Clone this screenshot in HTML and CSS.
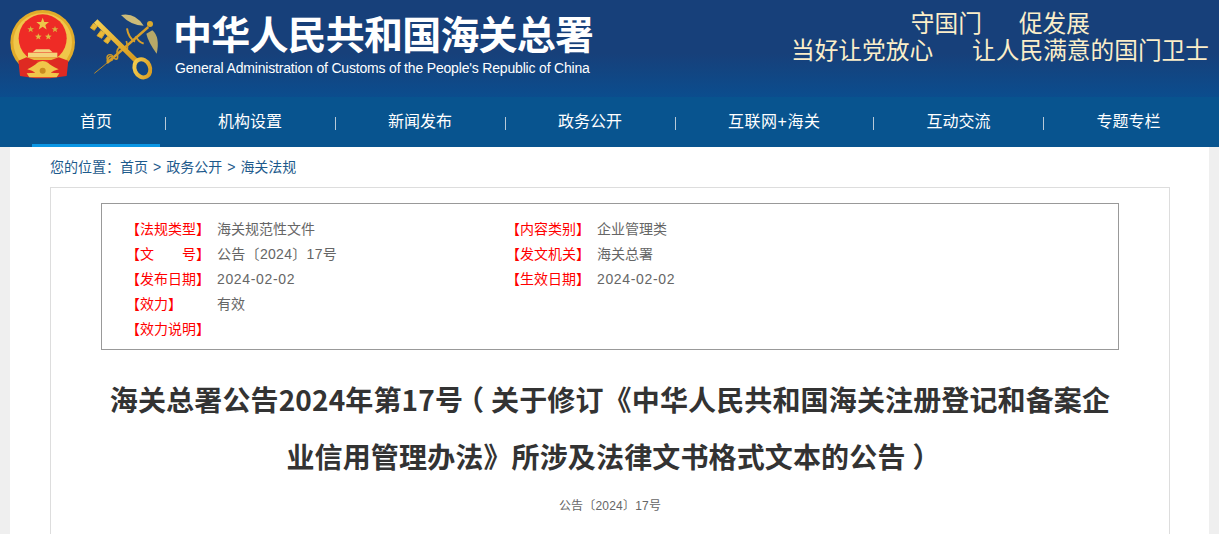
FILE: index.html
```html
<!DOCTYPE HTML>
<html>
<head>
<meta charset="UTF-8">
<title>海关总署公告2024年第17号</title>
<link rel="stylesheet" href="styles.css">
</head>
<body>
<div class="header">
	<div class="header-logos">
		<svg class="emblem" width="80" height="90" viewBox="0 0 240 270">
			<defs>
				<polygon id="star" points="0,-10 2.6,-3.2 10,-3.1 4.2,1.4 6.2,8.5 0,4.4 -6.2,8.5 -4.2,1.4 -10,-3.1 -2.6,-3.2"/>
			</defs>
			<circle cx="128" cy="127" r="97" fill="#e2ac2a"/>
			<circle cx="128" cy="127" r="88" fill="#f0c64a"/>
			<circle cx="128" cy="115" r="72" fill="#ee2b26"/>
			<use href="#star" transform="translate(128 72) scale(1.9)" fill="#ecc64a"/>
			<use href="#star" transform="translate(92 88)" fill="#d9b23e"/>
			<use href="#star" transform="translate(115 110)" fill="#e2bb42"/>
			<use href="#star" transform="translate(145 110)" fill="#e2bb42"/>
			<use href="#star" transform="translate(165 88)" fill="#d9b23e"/>
			<path d="M108 148 L148 148 L158 157 L98 157 Z" fill="#f3d680"/>
			<path d="M84 158 L172 158 L172 172 L84 172 Z" fill="#f4d37a"/>
			<path d="M75 172 L181 172 L181 180 L75 180 Z" fill="#e8b940"/>
			<path d="M55 182 L80 172 L128 190 L176 172 L205 182 L200 228 L150 235 L106 235 L60 228 Z" fill="#de2a22"/>
			<path d="M82 208 Q104 196 112 188 Q128 178 144 188 Q152 196 176 208 Q160 212 152 218 L178 220 L170 232 L88 232 L80 220 L106 218 Q98 212 82 208 Z" fill="#f0c64a"/>
			<circle cx="128" cy="212" r="9" fill="#c98c20"/>
		</svg>
		<svg class="key" width="80" height="80" viewBox="0 0 240 240">
			<defs>
				<linearGradient id="gold" x1="0" y1="0" x2="1" y2="1">
					<stop offset="0" stop-color="#f6d052"/>
					<stop offset="1" stop-color="#d6991e"/>
				</linearGradient>
			</defs>
			<path d="M108 30 Q150 22 176 62 Q138 62 108 30 Z" fill="#cdbb78"/>
			<path d="M202 76 Q226 96 215 146 Q190 112 184 86 Z" fill="#b8a868"/>
			<path d="M28 205 L66 174" stroke="#b98a2c" stroke-width="3" fill="none"/>
			<path d="M66 174 L190 66" stroke="#d9a02a" stroke-width="7" fill="none"/>
			<circle cx="195" cy="57" r="9" fill="#dba92c"/>
			<path d="M126 70 Q130 98 150 110 M176 116 Q160 110 152 94" stroke="#d9a02a" stroke-width="6" fill="none"/>
			<path d="M66 170 Q72 145 88 160 Q102 170 96 140 Q100 118 122 132 Q132 136 124 108" stroke="#cf9a28" stroke-width="5" fill="none"/>
			<circle cx="75" cy="158" r="9" stroke="#cf9a28" stroke-width="4" fill="none"/>
			<path d="M32 48 L152 166" stroke="url(#gold)" stroke-width="15" fill="none"/>
			<path d="M26 54 L16 68 L28 76 L38 62 M48 76 L36 92 L50 100 L60 84 M68 94 L56 108 L68 116 L78 102" fill="#e8b93a" stroke="#d8a62c" stroke-width="3"/>
			<ellipse cx="172" cy="190" rx="23" ry="28" transform="rotate(-25 172 190)" stroke="url(#gold)" stroke-width="12" fill="none"/>
		</svg>
	</div>
	<div class="header-name">
		<div class="name-cn">中华人民共和国海关总署</div>
		<div class="name-en">General Administration of Customs of the People's Republic of China</div>
	</div>
	<div class="motto">
		<div class="motto-one"><span>守国门</span><span>促发展</span></div>
		<div class="motto-two"><span>当好让党放心</span><span>让人民满意的国门卫士</span></div>
	</div>
</div>
<div class="nav">
	<a class="nav-item active">首页</a><i></i>
	<a class="nav-item">机构设置</a><i></i>
	<a class="nav-item">新闻发布</a><i></i>
	<a class="nav-item">政务公开</a><i></i>
	<a class="nav-item nav-long">互联网+海关</a><i></i>
	<a class="nav-item">互动交流</a><i></i>
	<a class="nav-item">专题专栏</a>
</div>
<div class="wrapper">
	<div class="crumb">您的位置：首页<span class="gt">&gt;</span>政务公开<span class="gt">&gt;</span>海关法规</div>
	<div class="article">
		<div class="info">
			<div class="info-col">
				<div class="info-row"><b>【法规类型】</b><span>海关规范性文件</span></div>
				<div class="info-row"><b>【文<em></em>号】</b><span class="wide">公告〔2024〕17号</span></div>
				<div class="info-row"><b>【发布日期】</b><span class="date">2024-02-02</span></div>
				<div class="info-row"><b>【效力】</b><span>有效</span></div>
				<div class="info-row"><b>【效力说明】</b><span></span></div>
			</div>
			<div class="info-col">
				<div class="info-row"><b>【内容类别】</b><span>企业管理类</span></div>
				<div class="info-row"><b>【发文机关】</b><span>海关总署</span></div>
				<div class="info-row"><b>【生效日期】</b><span class="date">2024-02-02</span></div>
			</div>
		</div>
		<h1>
			<span class="title-line"><span>海关总署公告2024年第17号</span><span class="paren">（</span><span>关于修订《中华人民共和国海关注册登记和备案企</span></span>
			<span class="title-line"><span>业信用管理办法》所涉及法律文书格式文本的公告</span><span class="paren">）</span></span>
		</h1>
		<div class="doc-no">公告〔2024〕17号</div>
	</div>
</div>
</body>
</html>
```
FILE: styles.css
```css
html,body{
	margin:0;
	padding:0;
	height:534px;
	overflow:hidden;
}
body{
	font-family:"Liberation Sans","Noto Sans CJK SC",sans-serif;
	background:#efefef;
	color:#333;
}
.header{
	height:97px;
	display:flex;
	background:linear-gradient(#17407a 0%,#17407a 55%,#0b4d8e 100%);
	color:#fff;
}
.header-logos{
	display:flex;
	gap:5px;
	width:175px;
	flex:none;
}
.key{
	margin-top:5px;
}
.name-cn{
	font-family:"Noto Sans CJK SC",serif;
	font-size:39px;
	font-weight:bold;
	line-height:48px;
	margin:8px 0 0 -2px;
	letter-spacing:-.8px;
	white-space:nowrap;
}
.name-en{
	font-size:14px;
	margin-top:4px;
	letter-spacing:-.18px;
	white-space:nowrap;
}
.motto{
	margin-left:auto;
	padding:11px 10px 0 0;
	color:#fbeec9;
	font-size:23.7px;
	line-height:27px;
	text-align:right;
}
.motto-one{
	display:flex;
	gap:37px;
	padding-right:119px;
	justify-content:flex-end;
}
.motto-two{
	display:flex;
	gap:39px;
}
.nav{
	height:50px;
	display:flex;
	align-items:center;
	padding-left:32px;
	background:#08548f;
}
.nav-item{
	height:50px;
	line-height:49px;
	padding:0 48px;
	box-sizing:border-box;
	font-size:16px;
	color:#fff;
}
.nav-long{
	letter-spacing:.5px;
}
.nav-item.active{
	border-bottom:3px solid #0a96e4;
}
.nav i{
	width:1px;
	height:13px;
	background:#b7c9d8;
	margin:3px 4px 0 5px;
}
.wrapper{
	width:1199px;
	height:387px;
	margin:0 auto;
	background:#fff;
}
.crumb{
	height:40px;
	line-height:40px;
	padding-left:40px;
	font-size:14px;
	color:#1d5a8c;
}
.gt{
	margin:0 5px;
}
.article{
	width:1120px;
	margin-left:40px;
	height:400px;
	border:1px solid #ddd;
	box-sizing:border-box;
	padding:15px 50px 0;
}
.info{
	display:flex;
	height:147px;
	border:1px solid #999;
	padding-top:13px;
	box-sizing:border-box;
	padding-left:24px;
	font-size:14px;
}
.info-col{
	width:380px;
}
.info-row{
	display:flex;
	height:25px;
	line-height:25px;
}
.info-row b{
	width:91px;
	font-weight:normal;
	color:#f00;
	display:flex;
	white-space:nowrap;
}
.info-row em{
	width:28px;
}
.info-row span{
	color:#666;
}
.info-row .date{
	letter-spacing:.65px;
}
.info-row .wide{
	letter-spacing:.3px;
}
h1{
	font-family:"Noto Sans CJK SC",sans-serif;
	margin:21px 0 0;
	font-size:28px;
	line-height:57px;
	letter-spacing:.14px;
	color:#333;
}
.title-line{
	display:flex;
	justify-content:center;
	white-space:nowrap;
}
.paren{
	width:28px;
	text-align:center;
	font-feature-settings:"halt";
}
.doc-no{
	margin-top:11px;
	text-align:center;
	font-size:12px;
	letter-spacing:.2px;
	color:#666;
}
```
